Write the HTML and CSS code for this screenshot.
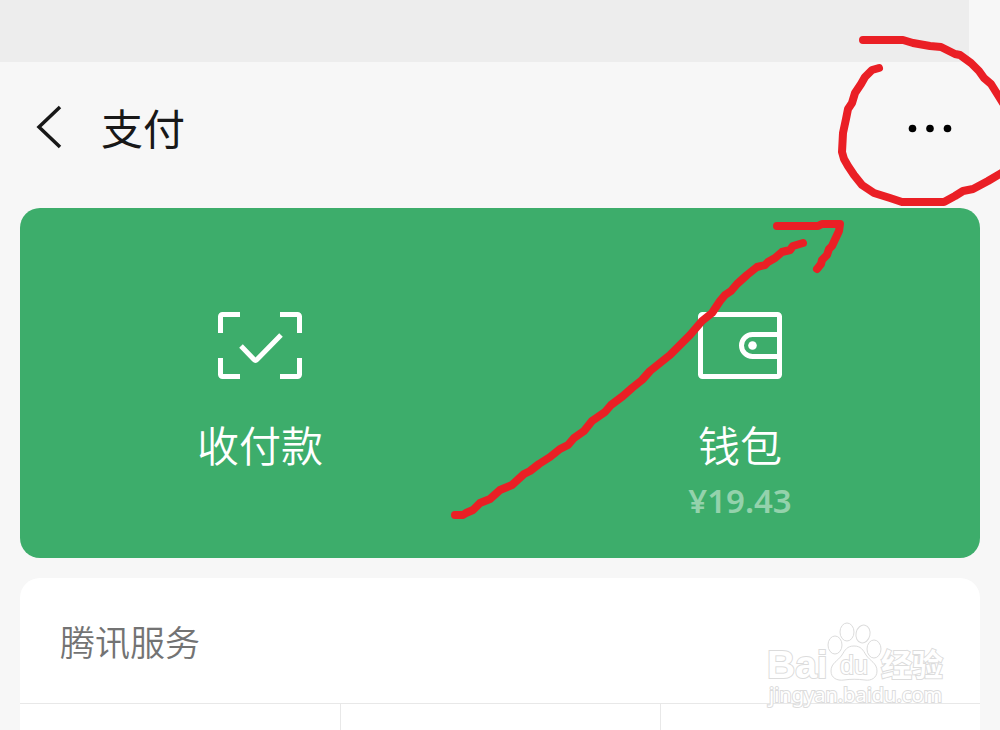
FILE: index.html
```
<!DOCTYPE html>
<html lang="zh-CN">
  <head>
    <meta charset="UTF-8" />
    <meta name="viewport" content="width=device-width, initial-scale=1.0" />
    <title>支付</title>
    <link rel="stylesheet" href="styles.css">
  </head>
  <body>
    <div class="status"></div>
    <header class="header">
      <button class="back" type="button" aria-label="返回">
        <svg width="28" height="44" viewBox="0 0 28 44">
          <path d="M25 2L4 22l21 20" fill="none" stroke="#181818" stroke-width="3.5" />
        </svg>
      </button>
      <h1 class="title">支付</h1>
      <button class="more" type="button" aria-label="更多">
        <svg width="44" height="12" viewBox="0 0 44 12">
          <circle cx="4.5" cy="7.5" r="3.8" />
          <circle cx="22" cy="7.5" r="3.8" />
          <circle cx="39.5" cy="7.5" r="3.8" />
        </svg>
      </button>
    </header>
    <main class="main">
      <section class="pay">
        <a class="entry" href="#">
          <svg class="icon" width="84" height="68" viewBox="0 0 84 68">
            <path d="M2.5 21V4.5a2 2 0 0 1 2-2H22M62 2.5h17.5a2 2 0 0 1 2 2V21M81.5 46v16.500a2 2 0 0 1-2 2H62M22 64.500H4.5a2 2 0 0 1-2-2V46" />
            <path d="M23 34l13 13.5q1.5 1.5 3 0L63 23" />
          </svg>
          <span class="name">收付款</span>
        </a>
        <a class="entry" href="#">
          <svg class="icon" width="84" height="68" viewBox="0 0 84 68">
            <rect x="2.5" y="2.5" width="79" height="62" rx="2" />
            <path d="M81 22.5H54.5a11 11 0 0 0 0 22H81" />
            <circle class="dot" cx="54.5" cy="33.5" r="4.3" />
          </svg>
          <span class="name">钱包</span>
          <span class="money">¥19.43</span>
        </a>
      </section>
      <section class="service">
        <h2 class="service-title">腾讯服务</h2>
        <div class="grid">
          <div class="cell"></div>
          <div class="cell"></div>
          <div class="cell"></div>
        </div>
      </section>
    </main>

    <!-- 水印 -->
    <svg class="watermark" width="196" height="90" viewBox="0 0 196 90">
      <g class="outline">
        <text class="logo" x="4" y="56">Bai</text>
        <path d="M91 24c7 0 9 4 12 9 4 6 11 8 11 16 0 7-6 10-12 9-8-1-14-1-21 0-7 1-13-2-13-9 0-8 7-10 11-16 3-5 5-9 12-9z" />
        <ellipse cx="72" cy="23" rx="7" ry="9" />
        <ellipse cx="84" cy="10" rx="7" ry="9" />
        <ellipse cx="100" cy="12" rx="7" ry="9" transform="rotate(12 100 12)" />
        <ellipse cx="111" cy="27" rx="7" ry="9" />
        <text class="du" x="77" y="52">du</text>
        <text class="cn" x="118" y="54">经验</text>
        <text class="site" x="6" y="80">jingyan.baidu.com</text>
      </g>
    </svg>

    <!-- 手绘标注 -->
    <svg class="mark" viewBox="0 0 1000 730" preserveAspectRatio="xMidYMin meet">
      <path d="M863 40H903L913 43 930 46 941 47 955 54 960 55 971 63 979 71 984 78 991 84 996 92 1003 103" />
      <path d="M879 68L872 70 865 77 861 84 855 93 852 103 848 109 846 119 843 133 842 152 844 159 848 166 854 175 862 185 874 193 890 198 902 202H944L955 196 963 191 973 189 988 181 1003 172" />
      <path d="M455 515H463L466 513 473 510 480 503 490 499 500 490 512 485 524 474 530 471 539 464 550 457 560 449 568 445 574 438 584 431 592 421 605 412 611 405 623 396 632 388 642 380 650 371 670 355 690 335 702 321 712 313 720 301 725 295 731 291 737 284 747 275 757 267 765 265 768 262 775 258 782 252 790 250 793 246 803 243" />
      <path d="M777 226H818L822 224H840L839 231 832 246 829 249 827 255 822 260 821 264 817 269" />
    </svg>
  </body>
</html>
```
FILE: styles.css
```
* {
  box-sizing: border-box;
}
body {
  position: relative;
  display: flex;
  flex-direction: column;
  min-height: 100vh;
  margin: 0;
  overflow-x: hidden;
  background: #f7f7f7;
  color: #181818;
  font-family: "Noto Sans CJK SC", sans-serif;
}
button {
  display: flex;
  align-items: center;
  padding: 0;
  border: 0;
  background: none;
  cursor: pointer;
}
.status {
  height: 62px;
  margin-right: 31px;
  background: #ededed;
}
.header {
  display: flex;
  align-items: center;
  height: 130px;
  padding: 0 48px 0 35px;
}
.title {
  margin: 0 0 0 38px;
  font-size: 42px;
  font-weight: 400;
  line-height: 60px;
}
.more {
  height: 44px;
  margin-left: auto;
}
.main {
  display: flex;
  flex: 1;
  flex-direction: column;
  gap: 20px;
  padding: 16px 20px 0;
}
.pay {
  display: grid;
  grid-template-columns: 1fr 1fr;
  min-height: 350px;
  padding-top: 104px;
  border-radius: 20px;
  background: #3dad6b;
}
.entry {
  display: flex;
  flex-direction: column;
  align-items: center;
  color: #fff;
  text-decoration: none;
}
.icon {
  fill: none;
  stroke: #fff;
  stroke-width: 5;
}
.icon .dot {
  fill: #fff;
  stroke: none;
}
.name {
  margin-top: 34px;
  font-size: 42px;
  font-weight: 350;
  line-height: 60px;
}
.money {
  color: #94d2ac;
  font-family: "Noto Sans", sans-serif;
  font-size: 33px;
  font-weight: 600;
  line-height: 54px;
}
.service {
  display: flex;
  flex: 1;
  flex-direction: column;
  border-radius: 20px 20px 0 0;
  background: #fff;
}
.service-title {
  margin: 0;
  padding: 38px 40px 37px;
  color: #737373;
  font-size: 35px;
  font-weight: 350;
  line-height: 50px;
}
.grid {
  display: grid;
  flex: 1;
  grid-template-columns: repeat(3, 1fr);
  border-top: 1px solid #e8e8e8;
}
.cell + .cell {
  border-left: 1px solid #e8e8e8;
}
.watermark {
  position: absolute;
  right: 41px;
  bottom: 18px;
}
.outline {
  fill: #fff;
  stroke: #dcdcdc;
  stroke-width: 1;
}
.outline text {
  stroke-width: 2;
  paint-order: stroke;
}
.logo {
  font-family: "Liberation Sans", sans-serif;
  font-size: 39px;
  font-weight: 700;
}
.du {
  font-family: "Liberation Sans", sans-serif;
  font-size: 25px;
}
.cn {
  font-size: 31px;
  font-weight: 700;
}
.site {
  font-family: "Noto Sans", sans-serif;
  font-size: 20px;
}
.mark {
  position: absolute;
  top: 0;
  left: 0;
  width: 100%;
  fill: none;
  stroke: #ea1f25;
  stroke-width: 8;
  stroke-linecap: round;
  stroke-linejoin: round;
  pointer-events: none;
}
```
